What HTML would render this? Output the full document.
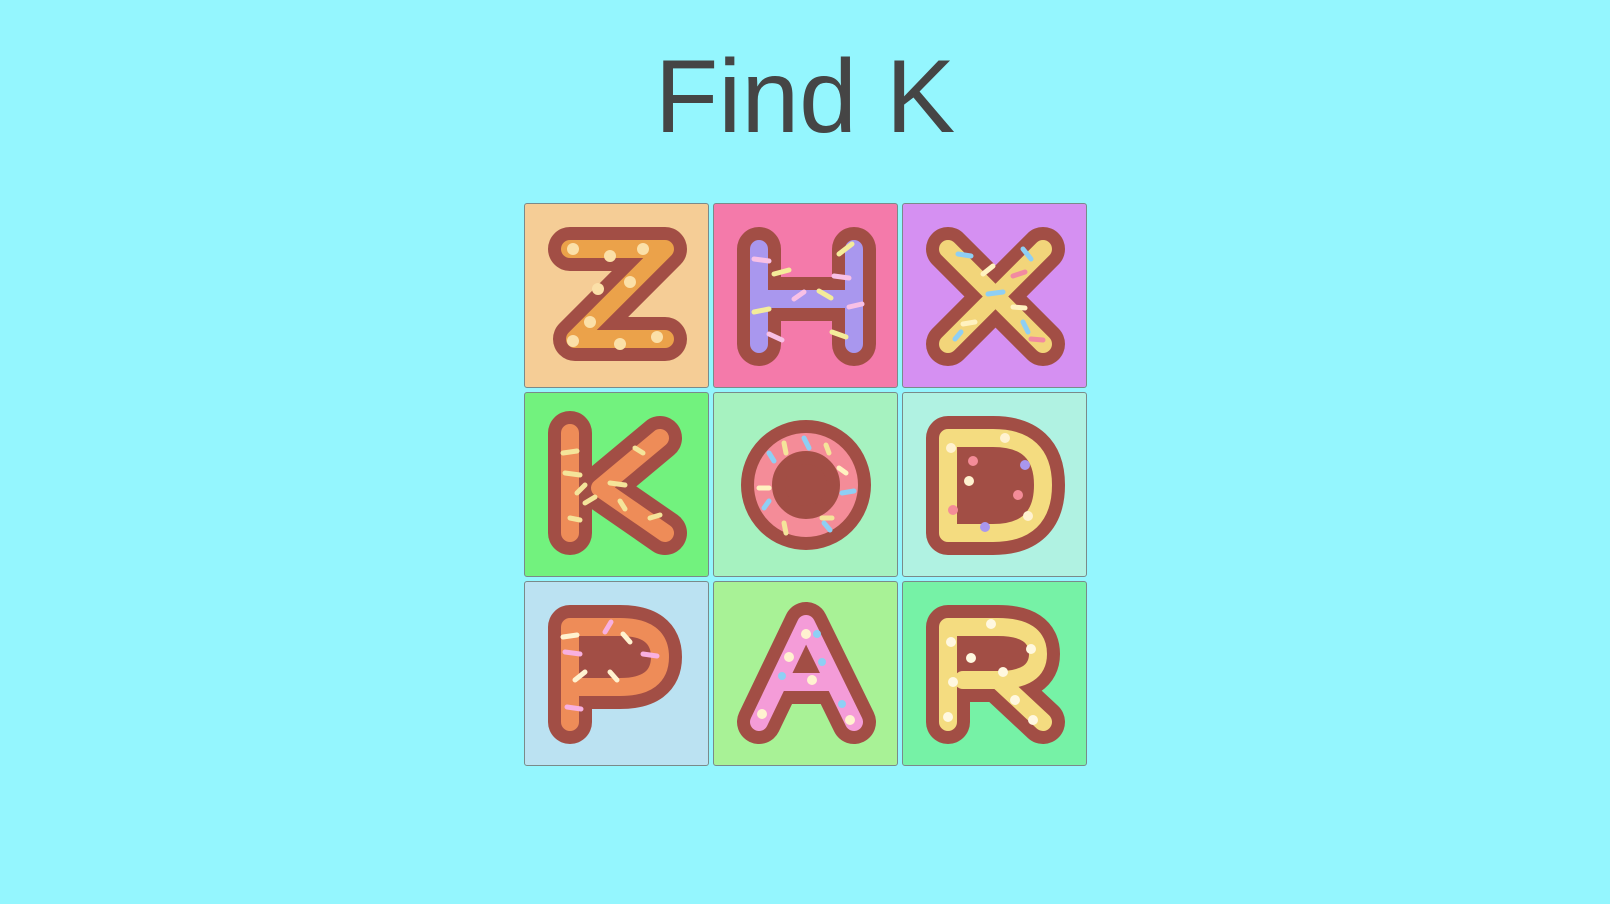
<!DOCTYPE html>
<html><head><style>
html,body{margin:0;padding:0;width:1610px;height:904px;background:#94f6fe;overflow:hidden}
h1{position:absolute;top:38px;left:0;width:1610px;text-align:center;margin:0;font:400 104px "Liberation Sans",sans-serif;color:#454545}
.t{position:absolute;width:183px;height:183px;border:1px solid #7a8a8a;border-radius:3px;box-sizing:content-box}
.t svg{position:absolute;left:0;top:0}
.b{fill:none;stroke:#a24e45;stroke-width:44;stroke-linecap:round;stroke-linejoin:round}
.bf{fill:#a24e45}
.f{fill:none;stroke-width:18;stroke-linecap:round;stroke-linejoin:round}
</style></head><body>
<h1>Find K</h1>
<div class="t" style="left:524px;top:203px;background:#f5cd96"><svg width="183" height="183"><path class="b" d="M45,45 L140,45 L50,135 L140,135"/><path class="f" stroke="#eba24a" d="M45,45 L140,45 L50,135 L140,135"/><g fill="#fbe0a8"><circle cx="48" cy="45" r="6"/><circle cx="85" cy="52" r="6"/><circle cx="118" cy="45" r="6"/><circle cx="105" cy="78" r="6"/><circle cx="73" cy="85" r="6"/><circle cx="65" cy="118" r="6"/><circle cx="48" cy="137" r="6"/><circle cx="95" cy="140" r="6"/><circle cx="132" cy="133" r="6"/></g></svg></div>
<div class="t" style="left:713px;top:203px;background:#f47aaa"><svg width="183" height="183"><path class="b" d="M45,45 L45,140 M140,45 L140,140 M45,95 L140,95"/><path class="f" stroke="#a997ee" d="M45,45 L45,140 M140,45 L140,140 M45,95 L140,95"/><g stroke-width="5" stroke-linecap="round"><path stroke="#f8c0e6" d="M40,55 L55,57"/><path stroke="#f4ec9a" d="M60,70 L75,66"/><path stroke="#f4ec9a" d="M125,50 L138,40"/><path stroke="#f8c0e6" d="M120,72 L135,74"/><path stroke="#f8c0e6" d="M80,95 L90,88"/><path stroke="#f4ec9a" d="M105,87 L117,94"/><path stroke="#f4ec9a" d="M40,108 L55,105"/><path stroke="#f8c0e6" d="M55,130 L68,136"/><path stroke="#f4ec9a" d="M118,128 L132,133"/><path stroke="#f8c0e6" d="M135,103 L148,100"/></g></svg></div>
<div class="t" style="left:902px;top:203px;background:#d590f2"><svg width="183" height="183"><path class="b" d="M45,45 L140,140 M140,45 L45,140"/><path class="f" stroke="#f2d57a" d="M45,45 L140,140 M140,45 L45,140"/><g stroke-width="5" stroke-linecap="round"><path stroke="#8ecff4" d="M55,50 L68,52"/><path stroke="#fff2c0" d="M80,70 L90,62"/><path stroke="#f28aa0" d="M110,72 L122,68"/><path stroke="#8ecff4" d="M85,90 L100,88"/><path stroke="#fff2c0" d="M110,103 L122,104"/><path stroke="#8ecff4" d="M120,118 L125,128"/><path stroke="#f28aa0" d="M128,135 L140,136"/><path stroke="#fff2c0" d="M60,120 L72,118"/><path stroke="#8ecff4" d="M52,135 L58,128"/><path stroke="#8ecff4" d="M120,45 L128,55"/></g></svg></div>
<div class="t" style="left:524px;top:392px;background:#72f27e"><svg width="183" height="183"><path class="b" d="M45,40 L45,140 M135,45 L75,95 L140,140"/><path class="f" stroke="#ee8c58" d="M45,40 L45,140 M135,45 L75,95 L140,140"/><g stroke-width="5" stroke-linecap="round" stroke="#f4e49a"><path d="M38,60 L52,58"/><path d="M40,80 L55,82"/><path d="M52,100 L60,92"/><path d="M85,90 L100,92"/><path d="M110,55 L118,60"/><path d="M60,110 L70,104"/><path d="M95,108 L100,116"/><path d="M125,125 L135,122"/><path d="M45,125 L55,127"/></g></svg></div>
<div class="t" style="left:713px;top:392px;background:#a6f2c0"><svg width="183" height="183"><circle class="b bf" cx="92" cy="92" r="43"/><circle class="f" stroke="#f48c98" cx="92" cy="92" r="43"/><g stroke-width="5" stroke-linecap="round"><path stroke="#8ecff4" d="M55,60 L60,68"/><path stroke="#f4e49a" d="M70,50 L72,60"/><path stroke="#8ecff4" d="M90,45 L95,55"/><path stroke="#f4e49a" d="M112,52 L115,60"/><path stroke="#fff2c0" d="M125,75 L132,80"/><path stroke="#8ecff4" d="M128,100 L140,98"/><path stroke="#f4e49a" d="M108,125 L118,125"/><path stroke="#8ecff4" d="M110,130 L116,137"/><path stroke="#f4e49a" d="M70,130 L72,140"/><path stroke="#fff2c0" d="M45,95 L55,95"/><path stroke="#8ecff4" d="M50,115 L55,108"/></g></svg></div>
<div class="t" style="left:902px;top:392px;background:#b0f2e2"><svg width="183" height="183"><path class="b bf" d="M45,45 L45,140 L90,140 Q140,140 140,92 Q140,45 90,45 Z"/><path class="f" stroke="#f4dc80" d="M45,45 L45,140 L90,140 Q140,140 140,92 Q140,45 90,45 Z"/><g><circle cx="48" cy="55" r="5" fill="#fff2d0"/><circle cx="70" cy="68" r="5" fill="#f48c98"/><circle cx="102" cy="45" r="5" fill="#fff2d0"/><circle cx="122" cy="72" r="5" fill="#a997ee"/><circle cx="66" cy="88" r="5" fill="#fff2d0"/><circle cx="115" cy="102" r="5" fill="#f48c98"/><circle cx="50" cy="117" r="5" fill="#f48c98"/><circle cx="82" cy="134" r="5" fill="#a997ee"/><circle cx="125" cy="123" r="5" fill="#fff2d0"/></g></svg></div>
<div class="t" style="left:524px;top:581px;background:#bbe2f2"><svg width="183" height="183"><path class="bf" d="M45,45 L95,45 Q135,45 135,75 Q135,105 95,105 L45,105 Z"/><path class="b" d="M45,140 L45,45 L95,45 Q135,45 135,75 Q135,105 95,105 L45,105"/><path class="f" stroke="#ee8c58" d="M45,140 L45,45 L95,45 Q135,45 135,75 Q135,105 95,105 L45,105"/><g stroke-width="5" stroke-linecap="round"><path stroke="#fff2d0" d="M38,55 L52,53"/><path stroke="#f8b0e0" d="M80,50 L86,40"/><path stroke="#fff2d0" d="M98,52 L105,60"/><path stroke="#f8b0e0" d="M40,70 L55,72"/><path stroke="#f8b0e0" d="M118,72 L132,74"/><path stroke="#fff2d0" d="M50,98 L60,90"/><path stroke="#fff2d0" d="M85,90 L92,98"/><path stroke="#f8b0e0" d="M42,125 L56,127"/></g></svg></div>
<div class="t" style="left:713px;top:581px;background:#a8f296"><svg width="183" height="183"><path class="b" d="M45,140 L92,42 L140,140 M65,100 L120,100"/><path class="f" stroke="#f49cd8" d="M45,140 L92,42 L140,140 M65,100 L120,100"/><g><circle cx="92" cy="52" r="5" fill="#fff2d0"/><circle cx="103" cy="52" r="4" fill="#8ecff4"/><circle cx="75" cy="75" r="5" fill="#fff2d0"/><circle cx="108" cy="80" r="4" fill="#8ecff4"/><circle cx="68" cy="94" r="4" fill="#8ecff4"/><circle cx="98" cy="98" r="5" fill="#fff2d0"/><circle cx="48" cy="132" r="5" fill="#fff2d0"/><circle cx="128" cy="122" r="4" fill="#8ecff4"/><circle cx="136" cy="138" r="5" fill="#fff2d0"/></g></svg></div>
<div class="t" style="left:902px;top:581px;background:#76f2a6"><svg width="183" height="183"><path class="bf" d="M45,45 L95,45 Q135,45 135,72 Q135,98 95,98 L45,98 Z"/><path class="b" d="M45,140 L45,45 L95,45 Q135,45 135,72 Q135,98 95,98 L60,98 M95,98 L140,140"/><path class="f" stroke="#f4dc80" d="M45,140 L45,45 L95,45 Q135,45 135,72 Q135,98 95,98 L60,98 M95,98 L140,140"/><g fill="#fff8e0"><circle cx="48" cy="60" r="5"/><circle cx="88" cy="42" r="5"/><circle cx="128" cy="67" r="5"/><circle cx="68" cy="76" r="5"/><circle cx="100" cy="90" r="5"/><circle cx="50" cy="100" r="5"/><circle cx="112" cy="118" r="5"/><circle cx="45" cy="135" r="5"/><circle cx="130" cy="138" r="5"/></g></svg></div>
</body></html>
